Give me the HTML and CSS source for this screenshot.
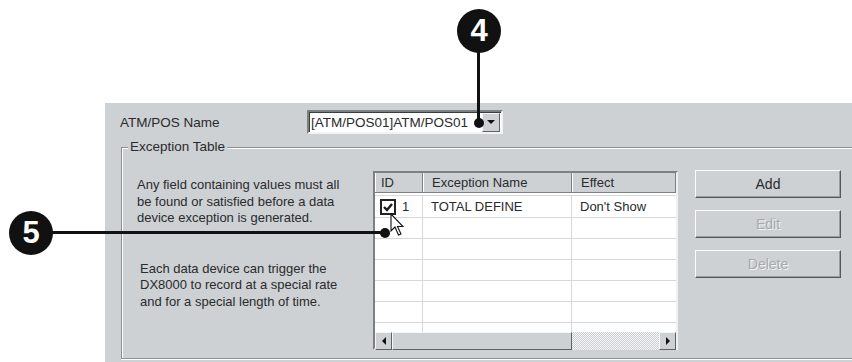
FILE: index.html
```html
<!DOCTYPE html>
<html lang="en">
<head>
  <meta charset="UTF-8" />
  <meta name="viewport" content="width=device-width, initial-scale=1.0"/>
  <title>Exception Table</title>
  <link rel="stylesheet" href="styles.css">
</head>
<body>
  <div class="panel">
    <div class="name-row">
      <span class="name-label">ATM/POS Name</span>
      <div class="combo">
        <span class="combo-text">[ATM/POS01]ATM/POS01</span>
        <span class="combo-btn"><span class="tri-down"></span></span>
      </div>
    </div>

    <div class="group">
      <div class="group-title">Exception Table</div>
      <div class="group-body">
        <div class="notes">
          <p>Any field containing values must all<br>be found or satisfied before a data<br>device exception is generated.</p>
          <p class="note-2">Each data device can trigger the<br>DX8000 to record at a special rate<br>and for a special length of time.</p>
        </div>

        <div class="listview">
          <div class="lv-head">
            <div class="col col-id">ID</div>
            <div class="col col-name">Exception Name</div>
            <div class="col col-effect">Effect</div>
          </div>
          <div class="lv-rows">
            <div class="lv-row first">
              <div class="col col-id">
                <span class="check">
                  <svg width="12" height="12" viewBox="0 0 12 12"><path d="M2 6 L5 9 L10 3" fill="none" stroke="#1a1a1a" stroke-width="2.4"/></svg>
                </span>1
              </div>
              <div class="col col-name">TOTAL DEFINE</div>
              <div class="col col-effect">Don't Show</div>
            </div>
            <div class="lv-row"><div class="col col-id"></div><div class="col col-name"></div><div class="col col-effect"></div></div>
            <div class="lv-row"><div class="col col-id"></div><div class="col col-name"></div><div class="col col-effect"></div></div>
            <div class="lv-row"><div class="col col-id"></div><div class="col col-name"></div><div class="col col-effect"></div></div>
            <div class="lv-row"><div class="col col-id"></div><div class="col col-name"></div><div class="col col-effect"></div></div>
            <div class="lv-row"><div class="col col-id"></div><div class="col col-name"></div><div class="col col-effect"></div></div>
            <div class="lv-row"><div class="col col-id"></div><div class="col col-name"></div><div class="col col-effect"></div></div>
          </div>
          <div class="hscroll">
            <span class="sb-btn"><span class="tri-left"></span></span>
            <span class="sb-thumb"></span>
            <span class="sb-track"></span>
            <span class="sb-btn"><span class="tri-right"></span></span>
          </div>
        </div>

        <div class="buttons">
          <button class="btn">Add</button>
          <button class="btn" disabled>Edit</button>
          <button class="btn" disabled>Delete</button>
        </div>
      </div>
    </div>
  </div>

  <!-- callouts drawn over the dialog -->
  <div class="callout callout-4">4</div>
  <div class="leader leader-4"></div>
  <div class="dot dot-4"></div>

  <div class="callout callout-5">5</div>
  <div class="leader leader-5"></div>
  <div class="dot dot-5"></div>

  <svg class="cursor" width="14" height="24" viewBox="0 0 14 24">
    <path d="M1 1 L1 18 L5 14 L8.5 22 L11 21 L7.5 13.5 L13 13.5 Z" fill="#fff" stroke="#111" stroke-width="1.1" stroke-linejoin="miter"/>
  </svg>
</body>
</html>
```

FILE: styles.css
```css
* {
  box-sizing: border-box;
}

body {
  margin: 0;
  position: relative;
  width: 852px;
  height: 362px;
  overflow: hidden;
  background: #fff;
  font-family: 'Liberation Sans', Arial, sans-serif;
  font-size: 13px;
  color: #2a2b2c;
}

p {
  margin: 0;
}

.panel {
  margin: 103px 0 0 105px;
  height: 259px;
  padding: 7px 0 0 15px;
  background: #cdd1d4;
}

.name-row {
  display: flex;
  align-items: center;
  height: 24px;
}

.name-label {
  width: 187px;
  font-size: 13.5px;
}

.combo {
  display: flex;
  align-items: center;
  width: 196px;
  height: 24px;
  background: #fff;
  border: 2px solid;
  border-color: #7d8083 #f2f3f4 #f2f3f4 #7d8083;
  box-shadow: inset 1px 1px 0 #3a3c3e;
  overflow: hidden;
}

.combo-text {
  flex: 1;
  padding-left: 2px;
  white-space: nowrap;
  overflow: hidden;
  font-size: 13.5px;
}

.combo-btn {
  display: flex;
  align-items: center;
  justify-content: center;
  width: 18px;
  height: 19px;
  margin-right: 1px;
  background: #cdd1d4;
  border: 1px solid;
  border-color: #f4f5f6 #5f6265 #5f6265 #f4f5f6;
}

.tri-down {
  border-left: 4px solid transparent;
  border-right: 4px solid transparent;
  border-top: 4px solid #111;
}

.group {
  margin: 13px 0 0 1px;
  height: 212px;
  border-top: 1px solid #8c8f92;
  border-left: 1px solid #8c8f92;
  border-bottom: 1px solid #8c8f92;
  box-shadow: inset 1px 1px 0 #fff, 0 1px 0 #fff;
}

.group-title {
  width: fit-content;
  margin: -9px 0 0 6px;
  padding: 0 2px;
  line-height: 16px;
  background: #cdd1d4;
  font-size: 13.5px;
}

.group-body {
  display: flex;
  margin-top: 16px;
  padding-left: 15px;
}

.notes {
  width: 236px;
  padding-top: 6px;
  line-height: 16.5px;
}

.note-2 {
  margin-top: 34px;
  padding-left: 3px;
}

.listview {
  width: 305px;
  height: 179px;
  background: #fff;
  border: 2px solid;
  border-color: #7d8083 #eef0f1 #eef0f1 #7d8083;
}

.lv-head {
  display: flex;
  height: 20px;
  background: #cdd1d4;
  border-bottom: 1px solid #7d8083;
}

.lv-head .col {
  line-height: 19px;
  border-left: 1px solid #fff;
  border-right: 1px solid #7d8083;
}

.col {
  padding-left: 8px;
  white-space: nowrap;
}

.col-id {
  width: 48px;
  padding-left: 5px;
}

.col-name {
  width: 149px;
}

.col-effect {
  flex: 1;
}

.lv-rows {
  height: 137px;
  margin-top: 2px;
  border-top: 1px solid #d5d8db;
  overflow: hidden;
}

.lv-row {
  display: flex;
  height: 21px;
  border-bottom: 1px solid #d5d8db;
}

.lv-row.first {
  height: 22px;
}

.lv-row .col {
  display: flex;
  align-items: center;
  border-right: 1px solid #d5d8db;
}

.lv-row .col-effect {
  border-right: none;
}

.check {
  display: flex;
  align-items: center;
  justify-content: center;
  width: 16px;
  height: 16px;
  margin-right: 6px;
  border: 2px solid #222;
  background: #fff;
}

.hscroll {
  display: flex;
  height: 18px;
}

.sb-btn,
.sb-thumb {
  display: flex;
  align-items: center;
  justify-content: center;
  height: 18px;
  background: #cdd1d4;
  border: 1px solid;
  border-color: #f4f5f6 #5f6265 #5f6265 #f4f5f6;
}

.sb-btn {
  width: 17px;
}

.sb-thumb {
  width: 180px;
}

.sb-track {
  flex: 1;
  background: repeating-conic-gradient(#cbcfd2 0 25%, #f6f7f8 0 50%) 0 0 / 2px 2px;
}

.tri-left {
  border-top: 4px solid transparent;
  border-bottom: 4px solid transparent;
  border-right: 4px solid #111;
}

.tri-right {
  border-top: 4px solid transparent;
  border-bottom: 4px solid transparent;
  border-left: 4px solid #111;
}

.buttons {
  display: flex;
  flex-direction: column;
  gap: 12px;
  margin: -1px 0 0 17px;
}

.btn {
  width: 146px;
  height: 28px;
  padding: 0;
  font-family: inherit;
  font-size: 14px;
  color: #2a2b2c;
  background: #cdd1d4;
  border: 1px solid;
  border-color: #fbfbfc #55585b #55585b #fbfbfc;
  box-shadow: inset -1px -1px 0 #9a9ea1;
}

.btn:disabled {
  color: #a6aaad;
  text-shadow: 1px 1px 0 #f2f3f4;
}

/* callouts */
.callout {
  position: absolute;
  width: 44px;
  height: 44px;
  border-radius: 50%;
  background: #111;
  color: #fff;
  font-size: 31px;
  font-weight: bold;
  line-height: 44px;
  text-align: center;
}

.callout-4 {
  left: 457px;
  top: 9px;
}

.callout-5 {
  left: 9px;
  top: 211px;
}

.leader {
  position: absolute;
  background: #111;
}

.leader-4 {
  left: 477px;
  top: 50px;
  width: 3px;
  height: 73px;
}

.leader-5 {
  left: 50px;
  top: 231px;
  width: 334px;
  height: 3px;
}

.dot {
  position: absolute;
  width: 10px;
  height: 10px;
  border-radius: 50%;
  background: #111;
}

.dot-4 {
  left: 473.5px;
  top: 118px;
}

.dot-5 {
  left: 380px;
  top: 227.5px;
}

.cursor {
  position: absolute;
  left: 390px;
  top: 213px;
}
```
